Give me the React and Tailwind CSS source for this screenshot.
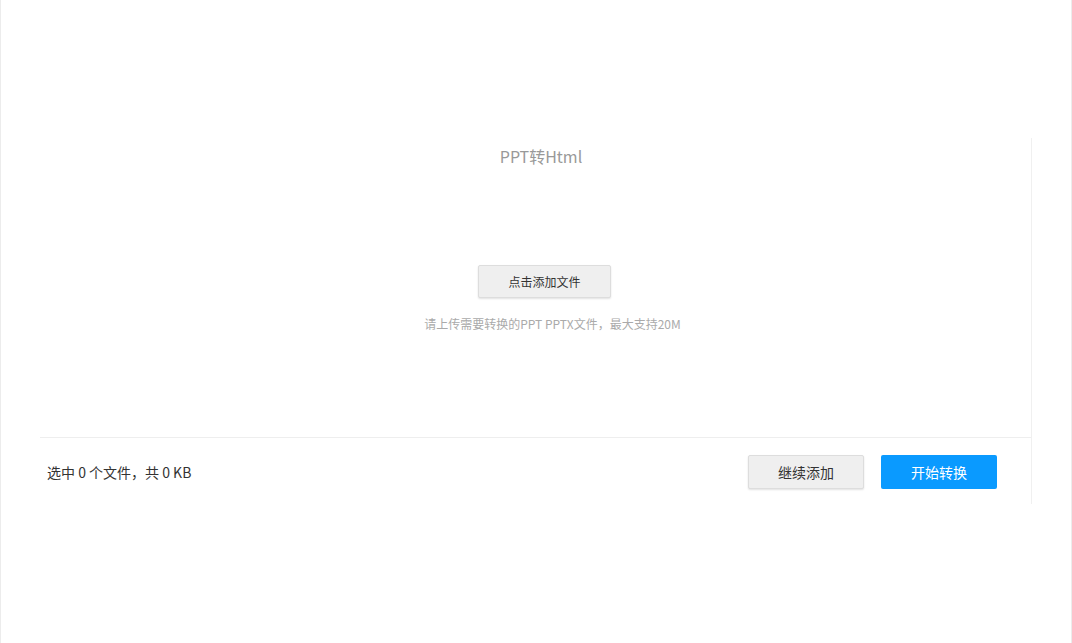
import React from 'react';

const App = () => {
    return (
        <div className="w-full h-[643px] pt-[138px] bg-white border-x border-[#ececec] font-['Noto_Sans_CJK_SC',sans-serif]">
            <div className="ml-[39px] w-[992px] border-r border-[#f0f0f0]">
                {/* Upload area */}
                <div className="flex flex-col items-center pl-[18px] pt-[6px] h-[300px] border-b border-[#eeeeee]">
                    <h2 className="mr-[7px] text-[16px] leading-[24px] text-[#999999] font-normal">PPT转Html</h2>
                    <button className="mt-[97px] w-[133px] h-[33px] bg-[#efefef] border border-[#dddddd] rounded-[2px] shadow-[0_1px_2px_rgba(0,0,0,0.12)] text-[12px] text-[#333333]">
                        点击添加文件
                    </button>
                    <p className="ml-[16px] mt-[17px] text-[12px] leading-[18px] text-[#aaaaaa]">
                        请上传需要转换的PPT PPTX文件，最大支持20M
                    </p>
                </div>

                {/* Footer */}
                <div className="flex items-center justify-between pl-[7px] pr-[34px] pt-[17px] pb-[15px]">
                    <span className="text-[14px] text-[#333333]">选中 0 个文件，共 0 KB</span>
                    <div className="flex gap-[17px]">
                        <button className="w-[116px] h-[34px] bg-[#efefef] border border-[#dddddd] rounded-[2px] shadow-[0_1px_2px_rgba(0,0,0,0.12)] text-[14px] text-[#333333]">
                            继续添加
                        </button>
                        <button className="w-[116px] h-[34px] bg-[#0a9aff] rounded-[2px] text-[14px] text-white">
                            开始转换
                        </button>
                    </div>
                </div>
            </div>
        </div>
    );
};

export default App;
